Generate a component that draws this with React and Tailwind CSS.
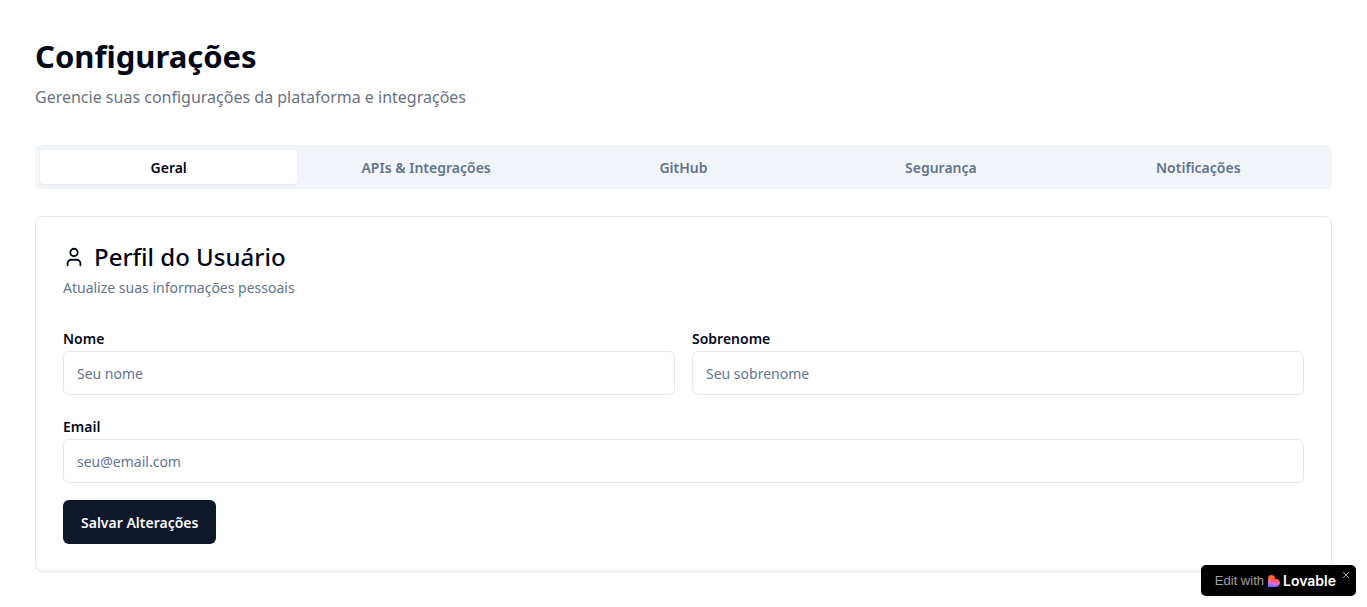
import { useState } from "react";
import { User } from "lucide-react";

const tabs = ["Geral", "APIs & Integrações", "GitHub", "Segurança", "Notificações"];

function Field({ id, label, type = "text", placeholder }) {
  return (
    <div className="flex flex-col">
      <label htmlFor={id} className="text-[14px] leading-6 font-semibold">
        {label}
      </label>
      <input
        id={id}
        type={type}
        placeholder={placeholder}
        className="h-11 w-full rounded-md border border-slate-200 bg-white px-[13px] text-[14px] text-slate-950 placeholder:text-[#64748b] focus:outline-2 focus:outline-slate-900"
      />
    </div>
  );
}

function LovableMark() {
  return (
    <svg viewBox="0 0 24 24" className="h-3 w-3" aria-hidden="true">
      <defs>
        <linearGradient id="mark" x1="0.6" y1="0" x2="0.4" y2="1">
          <stop offset="0.15" stopColor="#ff6a1a" />
          <stop offset="0.45" stopColor="#ff5a60" />
          <stop offset="0.7" stopColor="#e86bd6" />
          <stop offset="1" stopColor="#5b73ff" />
        </linearGradient>
      </defs>
      <path
        fill="url(#mark)"
        d="M7 0a7 7 0 0 1 7 6.6c.3 1.200 1 1.600 2.200 1.200A7.400 7.400 0 0 1 24 15.200C24 20.500 20 24 15 24H0V7A7 7 0 0 1 7 0Z"
      />
    </svg>
  );
}

function LovableBadge({ onClose }) {
  return (
    <div className="fixed right-[11px] bottom-[11px] flex h-[31px] items-center rounded-[5px] bg-black pr-5 pl-[14px] font-['Liberation_Sans',sans-serif]">
      <a href="#lovable" className="flex items-center gap-1">
        <span className="text-[13px] text-[#a1a1a1]">Edit with</span>
        <span className="flex items-center gap-[3px] font-['Inter',sans-serif] text-[14px] font-semibold text-white">
          <LovableMark />
          Lovable
        </span>
      </a>
      <button
        type="button"
        aria-label="Fechar"
        onClick={onClose}
        className="absolute top-[6px] right-[6px] text-[#a1a1a1]"
      >
        <svg viewBox="0 0 8 8" className="h-2 w-2" stroke="currentColor" aria-hidden="true">
          <path d="M1 1l6 6M7 1L1 7" />
        </svg>
      </button>
    </div>
  );
}

export default function App() {
  const [active, setActive] = useState("Geral");
  const [badge, setBadge] = useState(true);

  return (
    <main className="px-[35px] py-[35px] font-['Noto_Sans',sans-serif] text-[#020817]">
      <header>
        <h1 className="text-[31px] leading-[42px] font-bold">Configurações</h1>
        <p className="mt-[6px] text-[16px] leading-7 text-[#6b7280]">
          Gerencie suas configurações da plataforma e integrações
        </p>
      </header>

      <div role="tablist" className="mt-[34px] grid h-11 grid-cols-5 rounded-md bg-slate-100 p-[5px]">
        {tabs.map((tab) => (
          <button
            key={tab}
            type="button"
            role="tab"
            aria-selected={active === tab}
            onClick={() => setActive(tab)}
            className={
              active === tab
                ? "rounded-sm bg-white text-[14px] font-semibold text-[#020817] shadow-xs"
                : "rounded-sm text-[14px] font-semibold text-[#64748b]"
            }
          >
            {tab}
          </button>
        ))}
      </div>

      <section className="mt-[27px] rounded-lg border border-slate-200 bg-white p-[27px] shadow-xs">
        <h2 className="flex items-center gap-[9px] text-2xl leading-[26px] font-medium">
          <User size={22} aria-hidden="true" />
          Perfil do Usuário
        </h2>
        <p className="mt-[6px] text-[14px] leading-6 text-[#64748b]">Atualize suas informações pessoais</p>

        <form className="mt-[27px] flex flex-col" onSubmit={(e) => e.preventDefault()}>
          <div className="grid grid-cols-2 gap-[17px]">
            <Field id="nome" label="Nome" placeholder="Seu nome" />
            <Field id="sobrenome" label="Sobrenome" placeholder="Seu sobrenome" />
          </div>
          <div className="mt-5">
            <Field id="email" label="Email" type="email" placeholder="seu@email.com" />
          </div>
          <button
            type="submit"
            className="mt-[17px] h-11 self-start rounded-md bg-[#0f172a] px-[18px] text-[14px] font-semibold text-slate-50"
          >
            Salvar Alterações
          </button>
        </form>
      </section>

      {badge && <LovableBadge onClose={() => setBadge(false)} />}
    </main>
  );
}
